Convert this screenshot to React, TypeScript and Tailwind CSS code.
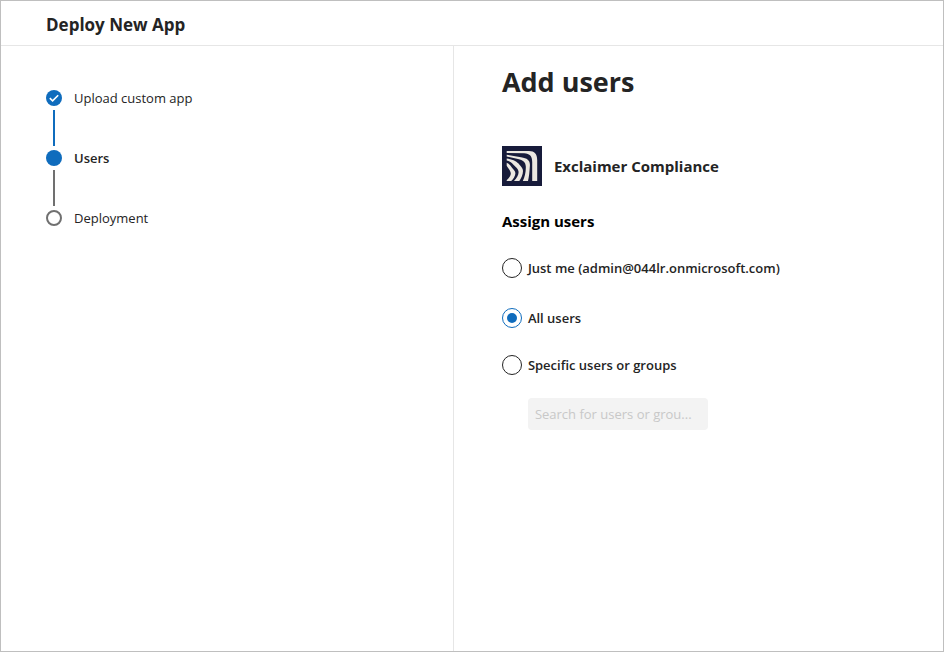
import React, { useState } from "react";

const steps = [
  { label: "Upload custom app", state: "done" },
  { label: "Users", state: "current" },
  { label: "Deployment", state: "upcoming" },
];

const options = [
  { id: "me", label: "Just me (admin@044lr.onmicrosoft.com)", row: "mb-[30px]" },
  { id: "all", label: "All users", row: "mb-[27px]" },
  { id: "specific", label: "Specific users or groups", row: "mb-[23px]" },
];

const StepMarker = ({ state }: { state: string }) => {
  if (state === "done") {
    return (
      <svg className="size-4" viewBox="0 0 16 16" fill="none" aria-hidden="true">
        <circle cx="8" cy="8" r="8" fill="#0F6CBD" />
        <path d="M3.8 8.2L6.6 10.8L12.2 5.2" stroke="white" strokeWidth="1.6" />
      </svg>
    );
  }
  if (state === "current") {
    return <span className="size-4 rounded-full bg-[#0F6CBD]" />;
  }
  return <span className="size-4 rounded-full border-2 border-[#707070]" />;
};

const Steps = () => (
  <ol className="flex flex-col">
    {steps.map((step, i) => (
      <li key={step.label} className="flex gap-3" aria-current={step.state === "current" ? "step" : undefined}>
        <div className="flex flex-col items-center">
          <StepMarker state={step.state} />
          {i < steps.length - 1 && (
            <span className={`my-1 h-9 w-0.5 ${step.state === "done" ? "bg-[#0F6CBD]" : "bg-[#707070]"}`} />
          )}
        </div>
        <span className={`text-[13px] leading-4 ${step.state === "current" ? "font-semibold" : ""}`}>{step.label}</span>
      </li>
    ))}
  </ol>
);

const AppLogo = () => (
  <svg className="size-10" viewBox="0 0 40 40" aria-hidden="true">
    <rect width="40" height="40" fill="#171B3A" />
    <g fill="#ECE8E1">
      <path d="M4.7 5H27C32.5 5 35.2 8 35.2 14V35H30.2V16C30.2 10.5 28 7.3 22 7.2L4.7 7Z" />
      <path d="M4.7 8.7L19 11.3C25.5 12.3 28.2 14.5 27.9 19.5C27.5 26 27 31 26 35H20.8C22.8 30.5 24 26 23.8 20.5C23.6 16 21 14.2 16 13L4.7 10.4Z" />
      <path d="M4.7 12.6C11.5 13.8 15 15.5 17.5 18.8C19.3 21 21 22.6 21 25C21 28.8 19 32.5 17.3 35H12C14.8 32 16.6 28.8 16.6 26C16.6 22.7 13 20.4 11.2 18.4C9.4 16.4 7.5 15.2 4.7 14.4Z" />
      <path d="M4.7 16.8C7.6 17.8 8.8 20 10.2 21.9C11.6 23.8 13.4 25 13.4 27.2C13.4 30 11.2 33 9.2 35H4.7V34.2C7 32 8.8 29.7 8.8 27.5C8.8 25.2 6.8 23.2 4.7 19.8Z" />
    </g>
  </svg>
);

const App = () => {
  const [selected, setSelected] = useState("all");

  return (
    <div className="flex min-h-screen flex-col border border-[#BFBFBF] bg-white font-['Open_Sans','Noto_Sans',sans-serif] text-[#242424]">
      <header className="border-b border-[#E6E6E6] px-[45px] pt-3 pb-2">
        <h1 className="text-[17px] leading-6 font-bold">Deploy New App</h1>
      </header>

      <div className="grid flex-1 grid-cols-[25fr_27fr]">
        <nav className="border-r border-[#E6E6E6] px-[45px] pt-11" aria-label="Progress">
          <Steps />
        </nav>

        <main className="px-12 pt-4">
          <h2 className="text-[27px] leading-10 font-bold">Add users</h2>

          {/* App being deployed */}
          <div className="mt-11 flex items-center gap-3">
            <AppLogo />
            <span className="text-[15px] leading-6 font-bold">Exclaimer Compliance</span>
          </div>

          <fieldset className="mt-[23px]">
            <legend className="mb-[25px] text-[15px] leading-6 font-bold text-black">Assign users</legend>
            {options.map((option) => (
              <div key={option.id} className={`flex items-center gap-1.5 ${option.row}`}>
                <input
                  type="radio"
                  id={option.id}
                  name="assign"
                  checked={selected === option.id}
                  onChange={() => setSelected(option.id)}
                  className="size-5 appearance-none rounded-full border border-[#242424] bg-clip-content p-1 checked:border-[#0F6CBD] checked:bg-[#0F6CBD]"
                />
                <label htmlFor={option.id} className="text-[13px] leading-5 font-semibold">
                  {option.label}
                </label>
              </div>
            ))}
            <input
              type="text"
              aria-label="Search for users or groups"
              placeholder="Search for users or grou..."
              disabled={selected !== "specific"}
              className="ml-[26px] block h-8 w-[180px] rounded bg-[#F3F3F3] px-[7px] text-[13px] placeholder:text-[#C8C8C8]"
            />
          </fieldset>
        </main>
      </div>
    </div>
  );
};

export default App;
